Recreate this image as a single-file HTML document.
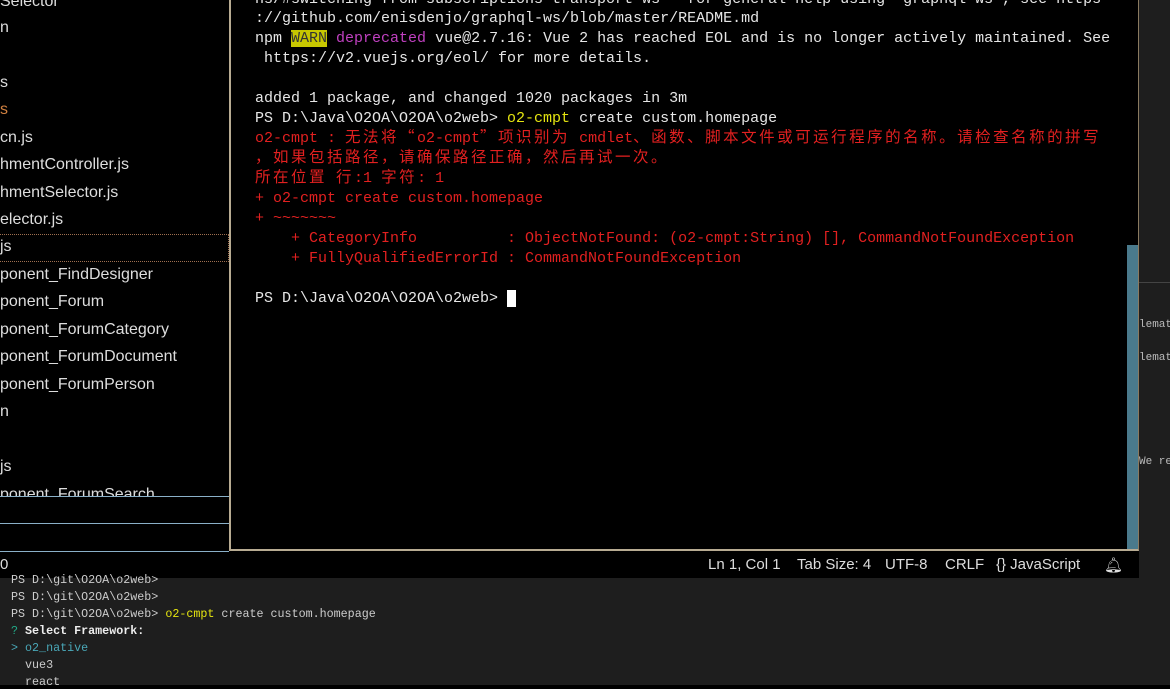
<!DOCTYPE html>
<html><head><meta charset="utf-8"><style>
*{margin:0;padding:0;box-sizing:border-box}
body{width:1170px;height:685px;background:#000;position:relative;overflow:hidden;font-family:"Liberation Sans",sans-serif}
.sb{position:absolute;left:0;top:0;width:229px;height:552px;background:#000;color:#ddd;font-size:16px}
.sb div{position:absolute;left:0;white-space:pre}
.term{position:absolute;left:229px;top:0;width:910px;height:551px;background:#000;border-left:2px solid #b8ab92;border-bottom:2px solid #b8ab92;border-right:1px solid #8a7a60}
.t{position:absolute;left:24px;white-space:pre;font-family:"Liberation Mono","Noto Sans CJK SC",monospace;font-size:15px;color:#e6e6e6;line-height:20px;height:20px}
.r{color:#e22020}.y{color:#e5e510}.p{color:#c040c0}
.c{font-family:"Noto Sans CJK SC",sans-serif;font-size:15.5px;letter-spacing:2.5px;line-height:0}
.status{position:absolute;left:0;top:552px;width:1138px;height:26px;background:#000;color:#ddd;font-size:15px}
.status span{position:absolute;top:4px}
.right{position:absolute;left:1139px;top:0;width:31px;height:578px;background:#1e1e1e}
.bot{position:absolute;left:0;top:578px;width:1170px;height:107px;background:#1e1e1e}
.b{position:absolute;left:11px;white-space:pre;font-family:"Liberation Mono",monospace;font-size:11.7px;color:#ccc}
.rs{position:absolute;left:0;font-family:"Liberation Mono",monospace;font-size:11px;color:#bbb;white-space:pre}
</style></head><body>
<div class="sb">
<div style="top:-7px">Selector</div>
<div style="top:19px">n</div>
<div style="top:74px">s</div>
<div style="top:101px;color:#d08040">s</div>
<div style="top:129px">cn.js</div>
<div style="top:156px">hmentController.js</div>
<div style="top:184px">hmentSelector.js</div>
<div style="top:211px">elector.js</div>
<div style="top:234px;height:28px;width:229px;border-top:1px dotted #a07050;border-bottom:1px dotted #a07050;border-right:1px dotted #a07050;padding-top:3px">js</div>
<div style="top:266px">ponent_FindDesigner</div>
<div style="top:293px">ponent_Forum</div>
<div style="top:321px">ponent_ForumCategory</div>
<div style="top:348px">ponent_ForumDocument</div>
<div style="top:376px">ponent_ForumPerson</div>
<div style="top:403px">n</div>
<div style="top:458px">js</div>
<div style="top:486px;height:10px;overflow:hidden">ponent_ForumSearch</div>
<div style="top:496px;width:229px;height:1px;background:#8ab0c8"></div>
<div style="top:523px;width:229px;height:1px;background:#8ab0c8"></div>
<div style="top:551px;width:229px;height:1px;background:#8ab0c8"></div>
</div>
<div class="term">
<div class="t" style="top:-10px">ns/#switching-from-subscriptions-transport-ws   for general help using "graphql-ws", see https</div>
<div class="t" style="top:9px">://github.com/enisdenjo/graphql-ws/blob/master/README.md</div>
<div class="t" style="top:29px">npm <span style="background:#c8c800;color:#333">WARN</span> <span class="p">deprecated</span> vue@2.7.16: Vue 2 has reached EOL and is no longer actively maintained. See</div>
<div class="t" style="top:49px"> https://v2.vuejs.org/eol/ for more details.</div>
<div class="t" style="top:89px">added 1 package, and changed 1020 packages in 3m</div>
<div class="t" style="top:109px">PS D:\Java\O2OA\O2OA\o2web&gt; <span class="y">o2-cmpt</span> create custom.homepage</div>
<div class="t r" style="top:129px">o2-cmpt : <span class="c">无法将“</span>o2-cmpt<span class="c">”项识别为</span> cmdlet<span class="c">、函数、脚本文件或可运行程序的名称。请检查名称的拼写</span></div>
<div class="t r" style="top:149px"><span class="c">，如果包括路径，请确保路径正确，然后再试一次。</span></div>
<div class="t r" style="top:169px"><span class="c">所在位置</span> <span class="c">行</span>:1 <span class="c">字符</span>: 1</div>
<div class="t r" style="top:189px">+ o2-cmpt create custom.homepage</div>
<div class="t r" style="top:209px">+ ~~~~~~~</div>
<div class="t r" style="top:229px">    + CategoryInfo          : ObjectNotFound: (o2-cmpt:String) [], CommandNotFoundException</div>
<div class="t r" style="top:249px">    + FullyQualifiedErrorId : CommandNotFoundException</div>
<div class="t" style="top:289px">PS D:\Java\O2OA\O2OA\o2web&gt; <span style="background:#fff">&nbsp;</span></div>
<div style="position:absolute;left:896px;top:245px;width:11px;height:304px;background:#4a7a8c"></div>
</div>
<div class="status">
<span style="left:0">0</span>
<span style="left:708px">Ln 1, Col 1</span>
<span style="left:797px">Tab Size: 4</span>
<span style="left:885px">UTF-8</span>
<span style="left:945px">CRLF</span>
<span style="left:996px">{} JavaScript</span>
<span style="left:1104px">🔔︎</span>
</div>
<div class="right">
<div style="position:absolute;left:0;top:282px;width:31px;height:1px;background:#444"></div>
<div class="rs" style="top:319px">lemat</div>
<div class="rs" style="top:352px">lemat</div>
<div class="rs" style="top:456px">We re</div>
</div>
<div class="bot">
<div class="b" style="top:-5px">PS D:\git\O2OA\o2web&gt;</div>
<div class="b" style="top:12px">PS D:\git\O2OA\o2web&gt;</div>
<div class="b" style="top:29px">PS D:\git\O2OA\o2web&gt; <span style="color:#e5e510">o2-cmpt</span> create custom.homepage</div>
<div class="b" style="top:46px"><span style="color:#2a8">?</span> <b style="color:#eee">Select Framework:</b></div>
<div class="b" style="top:63px;color:#4aa8b8">&gt; o2_native</div>
<div class="b" style="top:80px">  vue3</div>
<div class="b" style="top:97px">  react</div>
</div>
</body></html>
